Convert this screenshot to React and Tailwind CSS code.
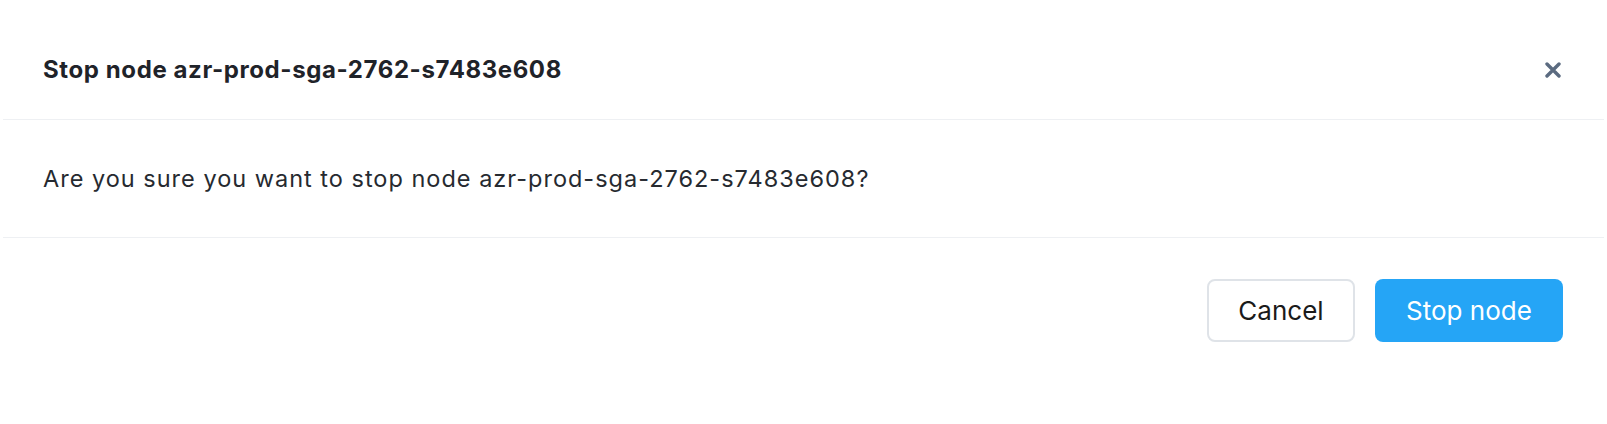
import React from "react";

export default function App() {
  return (
    <div className="w-full h-[424px] bg-white flex flex-col" style={{ fontFamily: "Inter, 'Noto Sans', sans-serif" }}>
      <div className="mx-[3px] h-[120px] pt-[21px] flex items-center justify-between pl-[40px] pr-[43px] border-b border-[#eef0f3]">
        <h2 className="text-[24px] font-bold tracking-[0.6px] text-[#1f2329]">Stop node azr-prod-sga-2762-s7483e608</h2>
        <button className="w-[16px] h-[16px] flex items-center justify-center text-[#5b6b80]" aria-label="Close">
          <svg width="16" height="16" viewBox="0 0 16 16" fill="none">
            <path d="M2 2L14 14M14 2L2 14" stroke="currentColor" strokeWidth="3.4" strokeLinecap="round" />
          </svg>
        </button>
      </div>
      <div className="mx-[3px] h-[118px] flex items-center pl-[40px] border-b border-[#eef0f3]">
        <p className="text-[23.5px] tracking-[1px] text-[#262a30]">Are you sure you want to stop node azr-prod-sga-2762-s7483e608?</p>
      </div>
      <div className="flex justify-end gap-[20px] pt-[41px] pr-[44px]">
        <button className="w-[148px] h-[63px] rounded-[8px] border-2 border-[#dfe3e8] bg-white text-[26px] text-[#1a1a1a]">Cancel</button>
        <button className="w-[188px] h-[63px] rounded-[8px] bg-[#25a5f6] text-[26px] text-white">Stop node</button>
      </div>
    </div>
  );
}
